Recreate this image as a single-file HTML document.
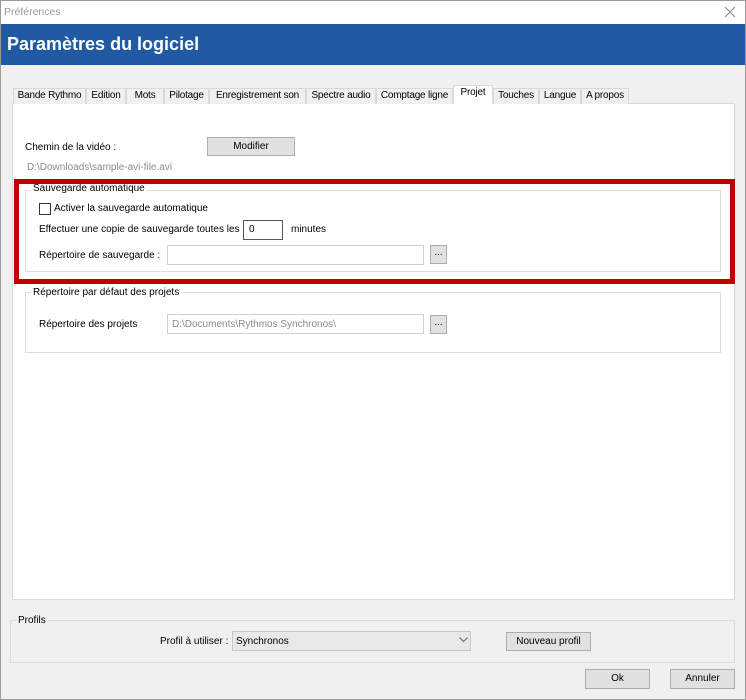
<!DOCTYPE html>
<html><head><meta charset="utf-8"><style>
*{box-sizing:border-box;margin:0;padding:0}
body{width:746px;height:700px;background:#f0f0f0;font-family:"Liberation Sans",sans-serif;font-size:10px;color:#000;position:relative;overflow:hidden}
.a{position:absolute;white-space:nowrap}
.tab{position:absolute;top:88px;height:16px;border:1px solid #d9d9d9;border-bottom:none;background:#f0f0f0;text-align:center;line-height:14px;font-size:10px;letter-spacing:-0.2px}
.btn{position:absolute;background:#e1e1e1;border:1px solid #adadad;text-align:center}
.inp{position:absolute;background:#fff;border:1px solid #d0d0d0}
.grp{position:absolute;border:1px solid #dcdcdc}
.leg{position:absolute;background:#fff;padding:0 2px}
</style></head><body>
<div class="a" style="left:0;top:0;width:746px;height:700px;border:1px solid #9a9a9a"></div>
<div class="a" style="left:1px;top:1px;width:744px;height:23px;background:#fff"></div>
<div class="a" style="left:4px;top:6px;color:#999;font-size:10.5px">Préférences</div>
<svg class="a" style="left:724px;top:6px" width="12" height="12"><path d="M1 1L11 11M11 1L1 11" stroke="#888" stroke-width="1"/></svg>
<div class="a" style="left:1px;top:24px;width:744px;height:41px;background:#1f5aa3"></div>
<div class="a" style="left:7px;top:34px;color:#fff;font-weight:bold;font-size:18px">Paramètres du logiciel</div>
<div class="a" style="left:12px;top:103px;width:723px;height:497px;background:#fff;border:1px solid #d9d9d9"></div>
<div class="tab" style="left:13px;width:73px">Bande Rythmo</div>
<div class="tab" style="left:86px;width:40px">Edition</div>
<div class="tab" style="left:126px;width:38px">Mots</div>
<div class="tab" style="left:164px;width:45px">Pilotage</div>
<div class="tab" style="left:209px;width:97px">Enregistrement son</div>
<div class="tab" style="left:306px;width:70px">Spectre audio</div>
<div class="tab" style="left:376px;width:77px">Comptage ligne</div>
<div class="tab" style="left:453px;width:40px;top:85px;height:19px;background:#fff;line-height:14px;border-bottom:1px solid #fff">Projet</div>
<div class="tab" style="left:493px;width:46px">Touches</div>
<div class="tab" style="left:539px;width:42px">Langue</div>
<div class="tab" style="left:581px;width:48px">A propos</div>
<div class="a" style="left:25px;top:142px">Chemin de la vidéo :</div>
<div class="btn" style="left:207px;top:137px;width:88px;height:19px;line-height:17px">Modifier</div>
<div class="a" style="left:27px;top:162px;color:#8a8a8a">D:\Downloads\sample-avi-file.avi</div>
<div class="grp" style="left:25px;top:190px;width:696px;height:82px"></div>
<div class="leg" style="left:31px;top:183px">Sauvegarde automatique</div>
<div class="a" style="left:39px;top:203px;width:12px;height:12px;border:1px solid #333;background:#fff"></div>
<div class="a" style="left:54px;top:203px">Activer la sauvegarde automatique</div>
<div class="a" style="left:39px;top:224px">Effectuer une copie de sauvegarde toutes les</div>
<div class="inp" style="left:243px;top:220px;width:40px;height:20px;border-color:#555;padding:3px 5px">0</div>
<div class="a" style="left:291px;top:224px">minutes</div>
<div class="a" style="left:39px;top:250px">Répertoire de sauvegarde :</div>
<div class="inp" style="left:167px;top:245px;width:257px;height:20px"></div>
<div class="btn" style="left:430px;top:245px;width:17px;height:19px;line-height:14px">...</div>
<div class="a" style="left:14px;top:179px;width:721px;height:105px;border:5px solid #c00000"></div>
<div class="grp" style="left:25px;top:292px;width:696px;height:61px"></div>
<div class="leg" style="left:31px;top:287px">Répertoire par défaut des projets</div>
<div class="a" style="left:39px;top:319px">Répertoire des projets</div>
<div class="inp" style="left:167px;top:314px;width:257px;height:20px;background:#fff;color:#8a8a8a;padding:4px 4px">D:\Documents\Rythmos Synchronos\</div>
<div class="btn" style="left:430px;top:315px;width:17px;height:19px;line-height:14px">...</div>
<div class="grp" style="left:10px;top:620px;width:725px;height:43px"></div>
<div class="a" style="left:16px;top:615px;background:#f0f0f0;padding:0 2px">Profils</div>
<div class="a" style="left:160px;top:636px">Profil à utiliser :</div>
<div class="a" style="left:232px;top:631px;width:239px;height:20px;background:#e8e8e8;border:1px solid #c8c8c8;padding:4px 3px">Synchronos</div>
<svg class="a" style="left:459px;top:637px" width="9" height="6"><path d="M0.5 0.5L4.5 4.5L8.5 0.5" stroke="#666" fill="none"/></svg>
<div class="btn" style="left:506px;top:632px;width:85px;height:19px;line-height:17px">Nouveau profil</div>
<div class="btn" style="left:585px;top:669px;width:65px;height:20px;line-height:18px">Ok</div>
<div class="btn" style="left:670px;top:669px;width:65px;height:20px;line-height:18px">Annuler</div>
</body></html>
